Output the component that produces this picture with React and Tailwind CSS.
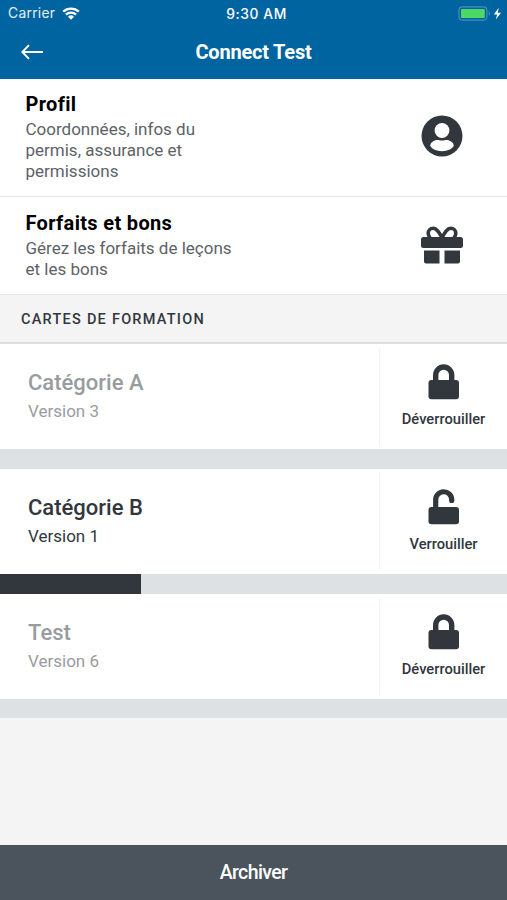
import React from "react";

const links = [
  {
    title: "Profil",
    desc: "Coordonnées, infos du permis, assurance et permissions",
    size: "h-[118px] pt-[13px]",
    descWidth: "w-[190px]",
    icon: (
      <svg className="h-[42px] w-[42px]" viewBox="0 0 42 42" fill="none">
        <circle cx="21" cy="21" r="20.5" fill="#31373d" />
        <circle cx="21" cy="15.5" r="7.4" fill="white" />
        <path d="M9.2 30.800c0-3.300 4-5.900 7.200-5.900 1.300 0 2.600.6 4.600.6s3.300-.6 4.600-.6c3.200 0 7.200 2.600 7.200 5.900-1.700 3.500-6.300 5.400-11.800 5.400s-10.100-1.900-11.800-5.400z" fill="white" />
      </svg>
    ),
  },
  {
    title: "Forfaits et bons",
    desc: "Gérez les forfaits de leçons et les bons",
    size: "h-[98px] pt-[14px]",
    descWidth: "w-[220px]",
    icon: (
      <svg className="h-[38px] w-[42px]" viewBox="0 0 42 38" fill="none">
        <path d="M21 11.500C18 6.200 15.500 2.200 12.300 2.200 9.300 2.200 7.200 4.500 7.200 7.300c0 2 .7 3.400 2 4.700M21 11.500c3-5.300 5.500-9.300 8.700-9.300 3 0 5.100 2.300 5.100 5.100 0 2-.7 3.400-2 4.700" stroke="#31373d" strokeWidth="3.600" />
        <rect x="0" y="11" width="42" height="11" rx="2.500" fill="#31373d" />
        <path d="M3 24.500h15.500V37.500H5a2 2 0 0 1-2-2zM23.500 24.500H39v11a2 2 0 0 1-2 2H23.500z" fill="#31373d" />
      </svg>
    ),
  },
];

const cards = [
  { title: "Catégorie A", version: "Version 3", locked: true, progress: 0 },
  { title: "Catégorie B", version: "Version 1", locked: false, progress: 27.8 },
  { title: "Test", version: "Version 6", locked: true, progress: 0 },
];

const LockIcon = ({ locked }) => (
  <svg className="h-[36px] w-[32px]" viewBox="0 0 32 36" fill="none">
    {locked ? (
      <>
        <path d="M7.700 18V11a8 8 0 0 1 16 0V18" stroke="#31373d" strokeWidth="5.400" />
        <rect x="0.500" y="16" width="30.500" height="19.200" rx="3" fill="#31373d" />
      </>
    ) : (
      <>
        <path d="M7.700 20V11a8 8 0 0 1 16-.500V11.500" stroke="#31373d" strokeWidth="5.200" />
        <circle cx="23.700" cy="11.500" r="2.600" fill="#31373d" />
        <rect x="0.500" y="18" width="30.500" height="17.200" rx="3" fill="#31373d" />
      </>
    )}
  </svg>
);

const StatusBar = () => (
  <div className="grid h-[27px] grid-cols-3 items-center px-2 font-['Inter'] text-white">
    <div className="flex items-center gap-[7px] text-[13.800px] tracking-[0.3px] text-white/90">
      Carrier
      <svg className="h-[13px] w-[18px]" viewBox="0 0 18 13" fill="none">
        <path d="M1.200 4.700a11.200 11.200 0 0 1 15.600 0M4 7.700a7.200 7.200 0 0 1 10 0" stroke="white" strokeWidth="2.300" />
        <path d="M9 12.700L6 9.700a4.300 4.300 0 0 1 6 0z" fill="white" />
      </svg>
    </div>
    <div className="pl-[6px] pt-px text-center text-[13.800px] font-medium tracking-[0.6px] whitespace-nowrap">
      9:30 AM
    </div>
    <div className="-mr-[3px] flex items-center justify-end">
      <svg className="h-[15px] w-[44px]" viewBox="0 0 44 15" fill="none">
        <rect x="0.900" y="0.900" width="28" height="13.200" rx="3.500" stroke="#4c8db9" strokeWidth="1.200" />
        <rect x="3" y="3" width="23.800" height="9" rx="1" fill="#4cd964" />
        <path d="M30.700 5.200c1.800.6 1.800 4 0 4.600z" fill="#4c8db9" />
        <path d="M40.800 1.700L35.800 8.500h3.300L37.800 13.500 43 6.700h-3.300z" fill="white" />
      </svg>
    </div>
  </div>
);

const App = () => {
  return (
    <div className="flex h-[900px] w-[507px] flex-col overflow-hidden bg-[#f4f4f4] font-['Roboto',sans-serif]">
      <header className="h-[79px] shrink-0 bg-[#0064a0]">
        <StatusBar />
        <div className="grid h-[49px] grid-cols-[60px_1fr_60px] items-center">
          <svg className="ml-[21px] h-[16px] w-[23px]" viewBox="0 0 23 16" fill="none">
            <path d="M22 8H1.500M8 1.200L1.300 8 8 14.800" stroke="white" strokeWidth="1.900" />
          </svg>
          <h1 className="text-center text-[20px] font-bold tracking-[-0.200px] text-white">Connect Test</h1>
        </div>
      </header>

      {links.map(({ title, desc, size, descWidth, icon }) => (
        <div
          key={title}
          className={`flex shrink-0 justify-between border-b border-[#e4e5e6] bg-white pl-[25.500px] ${size}`}
        >
          <div>
            <h2 className="text-[20px] leading-6 font-bold tracking-[0.340px] text-black">{title}</h2>
            <p className={`mt-[3px] text-[17px] leading-[21px] text-[#5d6266] ${descWidth}`}>{desc}</p>
          </div>
          <div className="mr-[44px] flex items-center pb-4">{icon}</div>
        </div>
      ))}

      <div className="flex h-[49px] shrink-0 items-center border-b-2 border-[#dadcde] pt-[2px] pl-[21px] text-[14.500px] font-medium tracking-[1.250px] text-[#31373d]">
        CARTES DE FORMATION
      </div>

      {cards.map(({ title, version, locked, progress }) => (
        <div key={title} className="group shrink-0">
          <div className="flex h-[105px] bg-white">
            <div className={`flex-1 pt-[25px] pl-7 ${locked ? "text-[#989c9f]" : "text-[#31373d]"}`}>
              <h3 className="text-[22px] leading-7 font-medium">{title}</h3>
              <p className="mt-1 text-[17px] leading-5">{version}</p>
            </div>
            <div className="my-1 flex w-[128px] flex-col items-center border-l border-[#f1f2f3] pt-4">
              <LockIcon locked={locked} />
              <span className="mt-[10px] text-[14.700px] leading-[18px] font-medium text-[#31373d]">
                {locked ? "Déverrouiller" : "Verrouiller"}
              </span>
            </div>
          </div>
          <div className="h-5 bg-[#dee1e4] group-last-of-type:h-[19px]">
            <div className="h-full bg-[#31373d]" style={{ width: `${progress}%` }} />
          </div>
        </div>
      ))}

      <button className="mt-auto h-[55px] shrink-0 bg-[#4b545c] text-[19.500px] font-medium tracking-[-0.600px] text-white">
        Archiver
      </button>
    </div>
  );
};

export default App;
